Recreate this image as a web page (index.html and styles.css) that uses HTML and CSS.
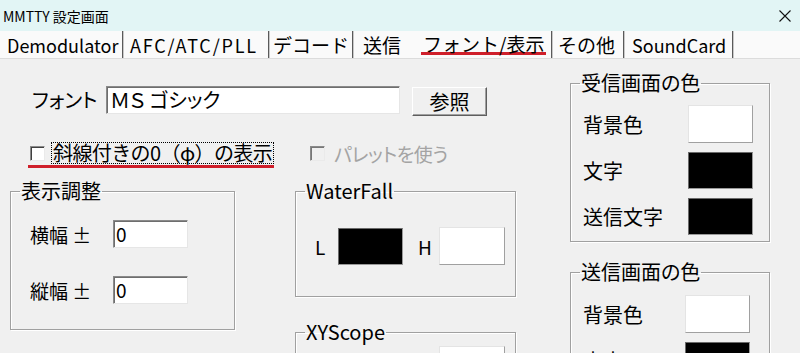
FILE: index.html
```html
<!DOCTYPE html>
<html lang="ja">
<head>
<meta charset="UTF-8" />
<title>MMTTY 設定画面</title>
<link rel="stylesheet" href="styles.css">
</head>
<body>
<div class="titlebar">
  <span class="title">MMTTY 設定画面</span>
  <svg class="close" width="12" height="12" viewBox="0 0 12 12" aria-label="閉じる">
    <path d="M0.5 0.5 L11.5 11.5 M11.5 0.5 L0.5 11.5" stroke="#111" stroke-width="1.1" fill="none" />
  </svg>
</div>

<div class="tabs">
  <span class="tab latin t-demod">Demodulator</span>
  <span class="tab latin t-afc">AFC/ATC/PLL</span>
  <span class="tab t-dec">デコード</span>
  <span class="tab plain t-send">送信</span>
  <span class="tab active t-font"><span class="mark">フォント/表示</span></span>
  <span class="tab t-etc">その他</span>
  <span class="tab latin t-sound">SoundCard</span>
</div>

<div class="panel">
  <div class="left">
    <div class="font-row">
      <span class="font-label">フォント</span>
      <div class="textbox wide">ＭＳ ゴシック</div>
      <button class="btn">参照</button>
    </div>

    <div class="check-row">
      <label class="check marked"><span class="box"></span><span class="focus">斜線付きの0（φ）の表示</span></label>
      <label class="check disabled"><span class="box"></span>パレットを使う</label>
    </div>

    <div class="groups">
      <fieldset class="group adjust">
        <legend>表示調整</legend>
        <div class="group-body">
          <div class="field"><span class="field-label">横幅 ±</span><div class="textbox small">0</div></div>
          <div class="field"><span class="field-label">縦幅 ±</span><div class="textbox small">0</div></div>
        </div>
      </fieldset>

      <div class="stack">
        <fieldset class="group waterfall">
          <legend>WaterFall</legend>
          <div class="group-body wf-row">
            <span class="wf-l">L</span><span class="swatch black"></span>
            <span class="wf-h">H</span><span class="swatch white wide-sw"></span>
          </div>
        </fieldset>
        <fieldset class="group xyscope">
          <legend>XYScope</legend>
          <div class="group-body xy-row"><span class="swatch white wide-sw"></span></div>
        </fieldset>
      </div>
    </div>
  </div>

  <div class="right">
    <fieldset class="group colors">
      <legend>受信画面の色</legend>
      <div class="group-body">
        <div class="color-row"><span>背景色</span><span class="swatch white"></span></div>
        <div class="color-row"><span>文字</span><span class="swatch black"></span></div>
        <div class="color-row"><span>送信文字</span><span class="swatch black"></span></div>
      </div>
    </fieldset>
    <fieldset class="group colors tx">
      <legend>送信画面の色</legend>
      <div class="group-body">
        <div class="color-row"><span>背景色</span><span class="swatch white"></span></div>
        <div class="color-row"><span>文字</span><span class="swatch black"></span></div>
      </div>
    </fieldset>
  </div>
</div>
</body>
</html>
```

FILE: styles.css
```css
/* Ventana de configuracion estilo Windows clasico */
body {
  margin: 0; padding: 0; background: #f0f0f0; color: #000;
  font-family: "Noto Sans CJK JP", "Noto Sans", sans-serif;
  font-feature-settings: "palt";
  overflow: hidden;
}

.titlebar {
  height: 31px; background: #e2f5f5;
  display: flex; align-items: center; justify-content: space-between;
  padding: 0 9px 0 3px;
}
.title { font-size: 14px; line-height: 16px; }
.close { display: block; }

/* pestañas */
.tabs {
  height: 27px; background: #fafafa;
  border-bottom: 1px solid #dcdcdc;
  display: flex; align-items: stretch;
  font-size: 19px; font-feature-settings: normal;
}
.tab {
  box-sizing: border-box;
  display: flex; align-items: center;
  padding-left: 7px;
  border-right: 1px solid #5a5a5a;
  box-shadow: 1px 0 0 #c8c8c8;
  margin-right: 1px;
  white-space: nowrap; overflow: hidden;
}
.tab.latin { font-size: 18px; }
.t-demod { width: 123px; }
.t-afc { width: 145px; letter-spacing: 1.8px; padding-left: 6px; }
.t-dec { width: 83px; padding-left: 3px; }
.t-send { width: 66px; padding-left: 9px; border-right: none; box-shadow: none; }
.t-font { width: 131px; padding-left: 0; }
.t-etc { width: 71px; padding-left: 5px; }
.t-sound { width: 108px; padding-left: 7px; }
.tab .mark {
  display: inline-block; line-height: 16px;
  border-bottom: 3px solid #cf1f2a;
  padding: 1px 2px 0 2px;
}

.panel {
  display: flex; padding-left: 10px;
  font-size: 20px;
}
.left { width: 506px; }
.right { width: 200px; margin-left: 54px; }

/* fila de fuente */
.font-row {
  display: flex; align-items: flex-start;
  margin-top: 27px; height: 30px;
}
.font-label { width: 74px; margin-left: 22px; line-height: 28px; }
.textbox {
  box-sizing: border-box; background: #fff;
  border: 1px solid; border-color: #8a8a8a #e6e6e6 #e6e6e6 #8a8a8a;
  box-shadow: inset 1px 1px 0 #6e6e6e;
  padding-left: 3px;
  line-height: 26px;
}
.textbox.wide { width: 294px; height: 28px; }
.textbox.small { width: 75px; height: 28px; padding-left: 2px; font-size: 19px; }
.btn {
  box-sizing: border-box; width: 75px; height: 29px;
  margin: 1px 0 0 12px; padding: 0;
  background: #f0f0f0; font: inherit; font-size: 20px; line-height: 26px;
  border: 1px solid; border-color: #fff #5e5e5e #5e5e5e #fff;
  box-shadow: inset -1px -1px 0 #a0a0a0;
}

/* casillas */
.check-row {
  display: flex; align-items: flex-start;
  margin-top: 27px; height: 25px;
}
.check { display: inline-flex; align-items: center; height: 20px; }
.box {
  box-sizing: border-box; width: 15px; height: 15px; background: #fff;
  border: 1px solid; border-color: #8a8a8a #eaeaea #eaeaea #8a8a8a;
  box-shadow: inset 1px 1px 0 #404040;
  margin-right: 7px;
}
.check.marked {
  margin-left: 18px; padding: 0 1px 2px 2px;
  border-bottom: 3px solid #cf1f2a;
}
.focus {
  outline: 1px dotted #000; outline-offset: 0;
  line-height: 20px; padding: 0 1px;
  font-feature-settings: normal; letter-spacing: -0.6px;
}
.check.disabled { margin-left: 36px; color: #a4a4a4; font-size: 19px; letter-spacing: -0.4px; }
.check.disabled .box { background: #f0f0f0; box-shadow: inset 1px 1px 0 #777; margin-right: 9px; }

/* grupos */
.groups { display: flex; align-items: flex-start; margin-top: 12px; }
.group {
  margin: 0; padding: 0; min-width: 0;
  box-sizing: border-box;
  border: 1px solid #a0a0a0;
  box-shadow: 1px 1px 0 #fff, inset 1px 1px 0 #fff;
}
.group legend {
  margin-left: 9px; padding: 0 1px;
  line-height: 22px; font-size: 20px;
}

.adjust { width: 225px; }
.adjust .group-body { padding: 0 0 25px 19px; }
.field { display: flex; align-items: center; margin-top: 18px; }
.field + .field { margin-top: 28px; }
.field-label { width: 83px; font-size: 19px; }

.stack { margin-left: 60px; }
.waterfall { width: 221px; }
.wf-row {
  display: flex; align-items: center; height: 38px;
  margin: 25px 0 31px; padding-left: 19px;
}
.wf-l { width: 23px; font-size: 19px; }
.wf-h { width: 21px; margin-left: 15px; font-size: 19px; }
.xyscope { width: 221px; margin-top: 24px; }
.xy-row { padding: 3px 0 10px 143px; }

.swatch {
  box-sizing: border-box; display: block;
  width: 65px; height: 38px;
  border: 1px solid; border-color: #e4e4e4 #a0a0a0 #a0a0a0 #e4e4e4;
}
.swatch.white { background: #fff; }
.swatch.black { background: #000; border-color: #6a6a6a #9a9a9a #9a9a9a #6a6a6a; height: 37px; }
.swatch.wide-sw { width: 66px; }

.colors { width: 200px; margin-top: 13px; }
.colors .group-body { padding: 11px 16px 6px 12px; }
.colors.tx { margin-top: 19px; }
.colors.tx .group-body { padding-top: 12px; padding-right: 19px; }
.color-row {
  display: flex; align-items: center; justify-content: space-between;
  height: 38px;
}
.color-row + .color-row { margin-top: 8px; }
```
